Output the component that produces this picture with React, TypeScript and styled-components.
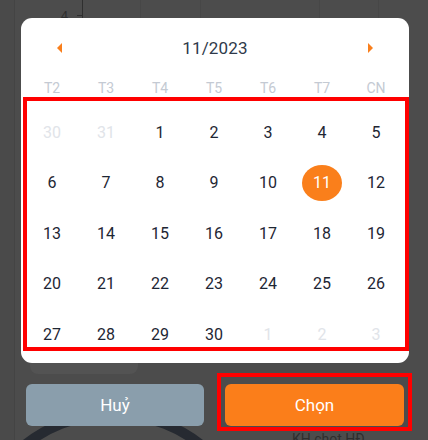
import React from "react";
import styled, { createGlobalStyle } from "styled-components";

const GlobalStyle = createGlobalStyle`
  html, body { margin: 0; padding: 0; background: #4c4c4c; }
  body { font-family: Roboto, "Noto Sans", Arial, sans-serif; }
  * { box-sizing: border-box; }
`;

const Screen = styled.div`
  position: relative;
  width: 428px;
  height: 440px;
  overflow: hidden;
  background: #4c4c4c;
`;

/* ---- dimmed page behind the overlay ---- */
const Backdrop = styled.div`
  position: absolute;
  inset: 0;
  pointer-events: none;
  background: linear-gradient(to right, #4a4a4a 14px, #444 14px, #444 15px, transparent 15px);
`;

const TopStrip = styled.div`
  display: flex;
  height: 22px;
`;

const AxisCell = styled.div`
  width: 83px;
  display: flex;
  justify-content: flex-end;
  align-items: center;
  gap: 9px;
  padding-top: 8px;
  border-right: 1px solid #2f2f2f;
  font-size: 13px;
  line-height: 1;
  color: #2f2f2f;
`;

const AxisTick = styled.span`
  width: 5px;
  height: 1px;
  background: #2f2f2f;
`;

const GridCell = styled.div<{ $w: number }>`
  width: ${(p) => p.$w}px;
  border-right: 1px solid #474747;
`;

const GhostCard = styled.div`
  position: absolute;
  left: 30px;
  top: 336px;
  width: 108px;
  height: 38px;
  border-radius: 8px;
  background: #535353;
  padding: 7px 0 0 36px;
  font-size: 14px;
  color: #2e2e2e;
`;

const GhostText = styled.span<{ $x: number; $y: number }>`
  position: absolute;
  left: ${(p) => p.$x}px;
  top: ${(p) => p.$y}px;
  font-size: 14px;
  color: #2e2e2e;
  white-space: nowrap;
`;

const Ring = styled.svg`
  position: absolute;
  left: 0;
  top: 380px;
`;

/* ---- foreground ---- */
const Foreground = styled.div`
  position: relative;
  z-index: 1;
  display: flex;
  flex-direction: column;
  padding: 18px 0 0 21px;
`;

const Card = styled.div`
  width: 388px;
  height: 345px;
  background: #ffffff;
  border-radius: 11px;
  display: flex;
  flex-direction: column;
`;

const Header = styled.div`
  height: 60px;
  padding: 0 36px;
  display: flex;
  align-items: center;
  justify-content: space-between;
`;

const Arrow = styled.svg`
  width: 5px;
  height: 10px;
  display: block;
`;

const Title = styled.span`
  font-size: 17px;
  color: #2f3a4a;
  letter-spacing: 0.2px;
`;

const WeekRow = styled.div`
  height: 19px;
  margin-left: 4px;
  width: 378px;
  display: grid;
  grid-template-columns: repeat(7, 54px);
  align-items: center;
`;

const WeekLabel = styled.span`
  text-align: center;
  font-size: 14px;
  color: #c4cad3;
`;

const Highlight = styled.div`
  margin-left: 2px;
  width: 386px;
  height: 254px;
  border: 4px solid #ff0000;
`;

const DayGrid = styled.div`
  margin-left: -2px;
  width: 378px;
  padding-top: 6px;
  display: grid;
  grid-template-columns: repeat(7, 54px);
  grid-auto-rows: 50.5px;
`;

const DayCell = styled.div`
  display: flex;
  align-items: center;
  justify-content: center;
`;

const DayNum = styled.span<{ $muted?: boolean; $selected?: boolean }>`
  width: 40px;
  height: 36px;
  border-radius: 50%;
  display: flex;
  align-items: center;
  justify-content: center;
  font-size: 16px;
  color: ${(p) => (p.$selected ? "#ffffff" : p.$muted ? "#e1e4e9" : "#1e2633")};
  background: ${(p) => (p.$selected ? "#fa7f1b" : "transparent")};
`;

const Actions = styled.div`
  display: flex;
  align-items: flex-start;
  gap: 13px;
  margin-top: 10px;
  padding-left: 5px;
`;

const Button = styled.button<{ $primary?: boolean }>`
  height: 42px;
  border: none;
  border-radius: 6px;
  font-family: Roboto, "Noto Sans", Arial, sans-serif;
  font-size: 17px;
  color: #ffffff;
  background: ${(p) => (p.$primary ? "#fb7e1a" : "#8a9eac")};
  width: ${(p) => (p.$primary ? "179px" : "178px")};
  margin-top: ${(p) => (p.$primary ? "7px" : "11px")};
  margin-left: ${(p) => (p.$primary ? "4px" : "0")};
  padding: 0;
`;

const ActionHighlight = styled.div`
  width: 195px;
  height: 58px;
  border: 4px solid #ff0000;
`;

type Day = { n: number; muted?: boolean };

const days: Day[] = [
  { n: 30, muted: true },
  { n: 31, muted: true },
  ...Array.from({ length: 30 }, (_, i) => ({ n: i + 1 })),
  { n: 1, muted: true },
  { n: 2, muted: true },
  { n: 3, muted: true },
];

const weekdays = ["T2", "T3", "T4", "T5", "T6", "T7", "CN"];

export default function App() {
  return (
    <>
      <GlobalStyle />
      <Screen>
        <Backdrop>
          <TopStrip>
            <AxisCell>
              <span>4</span>
              <AxisTick />
            </AxisCell>
            <GridCell $w={58} />
            <GridCell $w={60} />
            <GridCell $w={119} />
            <GridCell $w={59} />
          </TopStrip>
          <GhostCard>ngày</GhostCard>
          <GhostText $x={368} $y={343}>y</GhostText>
          <GhostText $x={292} $y={431}>KH chot HĐ</GhostText>
          <Ring width="428" height="60" viewBox="0 380 428 60">
            <circle cx="113" cy="555" r="141" fill="none" stroke="#262a31" strokeWidth="10" />
          </Ring>
        </Backdrop>
        <Foreground>
          <Card>
            <Header>
              <Arrow viewBox="0 0 5 10">
                <polygon points="5,0 0,5 5,10" fill="#f97f1c" />
              </Arrow>
              <Title>11/2023</Title>
              <Arrow viewBox="0 0 5 10">
                <polygon points="0,0 5,5 0,10" fill="#f97f1c" />
              </Arrow>
            </Header>
            <WeekRow>
              {weekdays.map((w) => (
                <WeekLabel key={w}>{w}</WeekLabel>
              ))}
            </WeekRow>
            <Highlight>
              <DayGrid>
                {days.map((d, i) => (
                  <DayCell key={i}>
                    <DayNum $muted={d.muted} $selected={!d.muted && d.n === 11}>
                      {d.n}
                    </DayNum>
                  </DayCell>
                ))}
              </DayGrid>
            </Highlight>
          </Card>
          <Actions>
            <Button>Huỷ</Button>
            <ActionHighlight>
              <Button $primary>Chọn</Button>
            </ActionHighlight>
          </Actions>
        </Foreground>
      </Screen>
    </>
  );
}
